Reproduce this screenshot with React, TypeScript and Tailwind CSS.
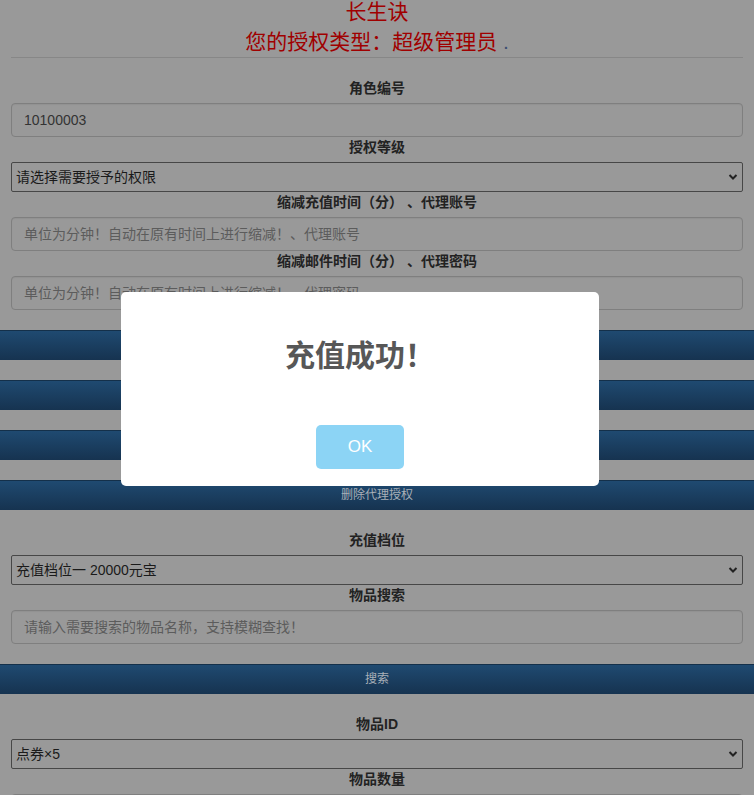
import React from "react";

function Label({ children }: { children: React.ReactNode }) {
  return (
    <div className="h-5 leading-5 mb-[5px] text-center text-[14px] font-bold text-[#222]">
      {children}
    </div>
  );
}

function TextInput({ value, placeholder }: { value?: string; placeholder?: string }) {
  return (
    <input
      readOnly
      defaultValue={value}
      placeholder={placeholder}
      className="block w-full h-[34px] rounded-[4px] border border-[#7f7f7f] bg-[#999] px-3 text-[14px] text-[#333] placeholder:text-[#5c5c5c] outline-none shadow-[inset_0_1px_1px_rgba(0,0,0,0.05)]"
    />
  );
}

function Select({ value }: { value: string }) {
  return (
    <div className="relative h-[30px]">
      <select
        defaultValue={value}
        className="block w-full h-[30px] appearance-none rounded-[2px] border border-[#474747] bg-[#999] pl-[4px] pr-6 text-[14px] text-[#1a1a1a] outline-none"
      >
        <option>{value}</option>
      </select>
      <svg
        className="pointer-events-none absolute right-[5px] top-[10px]"
        width="10"
        height="10"
        viewBox="0 0 10 10"
      >
        <path d="M1.5 3 L5 6.5 L8.5 3" fill="none" stroke="#222" strokeWidth="2" />
      </svg>
    </div>
  );
}

function Bar({ children }: { children?: React.ReactNode }) {
  return (
    <div className="mt-5 h-[30px] border-t border-[#14304a] bg-linear-to-b from-[#1f4a71] to-[#163350] text-center text-[12px] leading-[29px] text-[#a9b0b8]">
      {children}
    </div>
  );
}

export default function App() {
  return (
    <div className="min-h-[795px] bg-[#999] font-['Liberation_Sans','Noto_Sans_CJK_SC',sans-serif] overflow-hidden">
      <div className="text-center text-[21px] text-[#a00000]">
        <div className="h-6 leading-6">长生诀</div>
        <div className="mt-[6px] h-6 leading-6">
          您的授权类型：超级管理员 <span className="text-[#3c4e72]">.</span>
        </div>
      </div>
      <div className="mx-[11px] mt-[3px] border-t border-[#878787]" />

      <div className="px-[11px] pt-5">
        <Label>角色编号</Label>
        <TextInput value="10100003" />
        <Label>授权等级</Label>
        <Select value="请选择需要授予的权限" />
        <Label>缩减充值时间（分） 、代理账号</Label>
        <TextInput placeholder="单位为分钟！自动在原有时间上进行缩减！、代理账号" />
        <Label>缩减邮件时间（分） 、代理密码</Label>
        <TextInput placeholder="单位为分钟！自动在原有时间上进行缩减！、代理密码" />
      </div>

      <Bar />
      <Bar />
      <Bar />
      <Bar>删除代理授权</Bar>

      <div className="px-[11px] pt-5">
        <Label>充值档位</Label>
        <Select value="充值档位一 20000元宝" />
        <Label>物品搜索</Label>
        <TextInput placeholder="请输入需要搜索的物品名称，支持模糊查找！" />
      </div>

      <Bar>搜索</Bar>

      <div className="px-[11px] pt-5">
        <Label>物品ID</Label>
        <Select value="点券×5" />
        <Label>物品数量</Label>
        <TextInput placeholder="请输入物品数量" />
      </div>

      <div className="fixed left-[121px] top-[292px] w-[478px] h-[194px] rounded-[5px] bg-white">
        <div className="mt-[41px] h-10 leading-10 text-center text-[30px] font-bold text-[#575757] font-['Noto_Sans_CJK_SC',sans-serif]">
          充值成功！
        </div>
        <div className="mt-[52px] flex justify-center">
          <button className="w-[88px] h-[44px] rounded-[5px] bg-[#8cd4f5] text-[17px] text-white font-['Liberation_Sans',sans-serif]">
            OK
          </button>
        </div>
      </div>
    </div>
  );
}
